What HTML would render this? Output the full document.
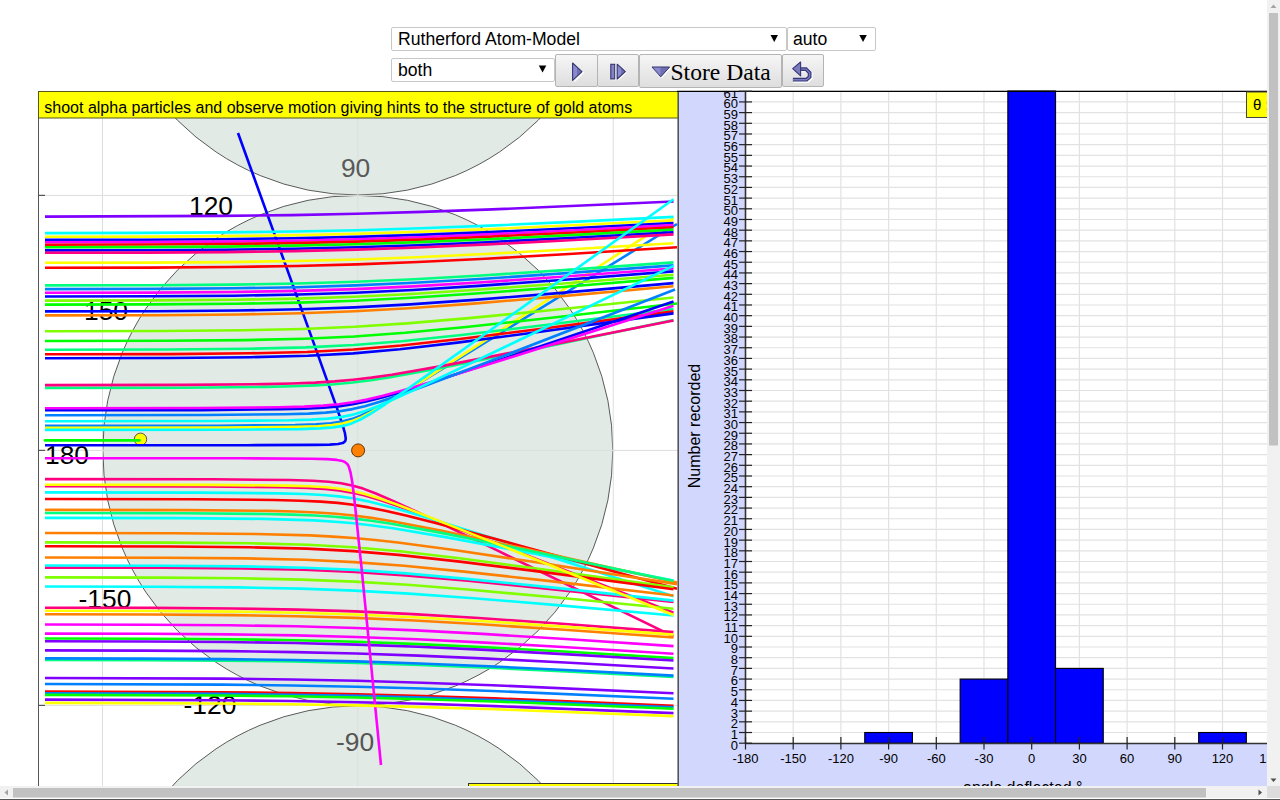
<!DOCTYPE html>
<html><head><meta charset="utf-8">
<style>
html,body{margin:0;padding:0;background:#fff;width:1280px;height:800px;overflow:hidden;font-family:"Liberation Sans",sans-serif;}
.abs{position:absolute;box-sizing:border-box;}
.sel{position:absolute;box-sizing:border-box;border:1px solid #c8c8c8;border-radius:2px;background:#fff;color:#000;font-size:17.6px;line-height:23px;padding-left:6px;white-space:nowrap;overflow:hidden;}
.sel .arr{position:absolute;right:0;top:0;font-size:11px;}
.btn{position:absolute;box-sizing:border-box;border:1px solid #b4b4b4;border-radius:2px;background:linear-gradient(#f6f6f6,#dedede);}
svg{position:absolute;left:0;top:0;}
</style></head>
<body>
<div class="sel" style="left:391px;top:27px;width:396px;height:24px;">Rutherford Atom-Model</div>

<div class="sel" style="left:787px;top:27px;width:89px;height:24px;padding-left:5px;">auto</div>

<div class="sel" style="left:391px;top:58px;width:164px;height:24px;">both</div>


<div class="btn" style="left:555px;top:54px;width:43px;height:33px;"></div>
<div class="btn" style="left:597px;top:54px;width:42px;height:33px;"></div>
<div class="btn" style="left:639px;top:54px;width:143px;height:34px;"></div>
<div class="btn" style="left:782px;top:54px;width:42px;height:33px;"></div>
<div class="abs" style="left:670.5px;top:57.5px;font-family:'Liberation Serif',serif;font-size:23.6px;line-height:28px;color:#000;">Store Data</div>

<svg width="1280" height="800" viewBox="0 0 1280 800">
 <defs><linearGradient id="ig" x1="0" y1="0" x2="1" y2="0"><stop offset="0" stop-color="#8a8ad0"/><stop offset="0.45" stop-color="#8a8ad0"/><stop offset="0.5" stop-color="#6e6eb0"/><stop offset="1" stop-color="#6e6eb0"/></linearGradient></defs>
 <!-- button icons -->
 <path d="M770.5 35 L778 35 L774.25 42 Z" fill="#000"/>
 <path d="M859.3 35 L866.8 35 L863.05 42 Z" fill="#000"/>
 <path d="M538.8 65.5 L546.3 65.5 L542.55 72.5 Z" fill="#000"/>
 <path d="M573.5 64 L583.5 72.5 L574.5 81.5" fill="none" stroke="#ffffff" stroke-width="1.2"/>
 <path d="M572.6 63 L582 71.6 L572.6 80.3 Z" fill="url(#ig)" stroke="#34346f" stroke-width="1.1" stroke-linejoin="round"/>
 <path d="M611.5 79.8 L615.6 79.8 L615.6 65 M618 80 L626.3 72.3" fill="none" stroke="#ffffff" stroke-width="1.1"/>
 <rect x="610.8" y="64.3" width="3.9" height="14.6" fill="#8484c4" stroke="#34346f" stroke-width="1.1"/>
 <path d="M617.2 64.2 L625.3 71.6 L617.2 79 Z" fill="url(#ig)" stroke="#34346f" stroke-width="1.1" stroke-linejoin="round"/>
 <path d="M661.5 77.8 L670.5 67.8" fill="none" stroke="#ffffff" stroke-width="1.1"/>
 <path d="M652 67 L669.6 67 L660.8 76.8 Z" fill="url(#ig)" stroke="#34346f" stroke-width="1" stroke-linejoin="round"/>
 <path d="M800.6 69.1 L806 69.1 L809.6 72.7 L809.6 77 L806.6 79.7 L792.9 79.7" fill="none" stroke="#ffffff" stroke-width="4.8" stroke-linejoin="miter" transform="translate(0.7,0.7)"/>
 <path d="M800.6 69.1 L806 69.1 L809.6 72.7 L809.6 77 L806.6 79.7 L792.9 79.7" fill="none" stroke="#36367a" stroke-width="3.8" stroke-linejoin="miter"/>
 <path d="M800.6 69.1 L806 69.1 L809.6 72.7 L809.6 77 L806.6 79.7 L792.9 79.7" fill="none" stroke="#7c7cbc" stroke-width="1.4" stroke-linejoin="miter"/>
 <path d="M792.7 68.7 L800.6 62 L800.6 75.9 Z" fill="#7c7cbc" stroke="#36367a" stroke-width="1.1" stroke-linejoin="round"/>

 <!-- left panel -->
 <defs>
  <clipPath id="lp"><rect x="39" y="118" width="639" height="668"/></clipPath>
  <clipPath id="rlab"><rect x="679" y="92" width="70" height="694"/></clipPath>
  <clipPath id="rp"><rect x="679" y="92" width="588" height="694"/></clipPath>
 </defs>
 <rect x="38.5" y="91.5" width="640" height="720" fill="#fff" stroke="#555" stroke-width="1"/>
 <g clip-path="url(#lp)">
  <circle cx="357.8" cy="-60" r="255" fill="#e1eae5" stroke="#333" stroke-width="0.8"/>
  <circle cx="357.8" cy="450.4" r="255" fill="#e1eae5" stroke="#333" stroke-width="0.8"/>
  <circle cx="357.8" cy="960.8" r="255" fill="#e1eae5" stroke="#333" stroke-width="0.8"/>
  <g stroke="#dddddd" stroke-width="1">
   <line x1="102.5" y1="118" x2="102.5" y2="786"/>
   <line x1="357.8" y1="118" x2="357.8" y2="786"/>
   <line x1="613.2" y1="118" x2="613.2" y2="786"/>
   <line x1="39" y1="195.4" x2="678" y2="195.4"/>
   <line x1="39" y1="450.4" x2="678" y2="450.4"/>
   <line x1="39" y1="705.4" x2="678" y2="705.4"/>
  </g>
  <g stroke="#555" stroke-width="1.2">
   <line x1="38" y1="195.4" x2="45" y2="195.4"/>
   <line x1="38" y1="450.4" x2="45" y2="450.4"/>
   <line x1="38" y1="705.4" x2="45" y2="705.4"/>
  </g>
  <g font-family="Liberation Sans" font-size="26.4" text-anchor="middle">
   <text x="355.6" y="176.6" fill="#5a5a5a">90</text>
   <text x="211" y="214.7" fill="#000">120</text>
   <text x="106" y="319.7" fill="#000">150</text>
   <text x="67" y="463.7" fill="#000">180</text>
   <text x="105" y="607.7" fill="#000">-150</text>
   <text x="210" y="713.7" fill="#000">-120</text>
   <text x="355" y="750.7" fill="#555">-90</text>
  </g>
  <circle cx="140.5" cy="439.3" r="6.2" fill="#ffff00" stroke="#444" stroke-width="0.9"/>
  <g fill="none" stroke-width="2.6" stroke-linecap="butt" stroke-linejoin="round">
<path d="M45 440.4 L139.5 440.4" stroke="#00ff00" stroke-linecap="round"/>
<path d="M45.0 445.3 L247.0 445.2 L315.3 444.9 L329.7 444.6 L338.1 444.0 L342.7 443.0 L344.2 442.2 L345.1 441.2 L345.6 439.9 L345.7 438.2 L344.9 433.0 L342.4 424.4 L337.3 409.2 L312.3 339.1 L238.0 133.0" stroke="#0000ff"/>
<path d="M45.0 425.9 L218.2 425.7 L295.1 425.0 L316.2 424.3 L330.9 423.2 L342.0 421.6 L351.7 419.1 L361.3 415.4 L373.3 409.6 L389.2 400.8 L411.3 387.8 L492.7 338.0 L677.0 224.0" stroke="#0080ff"/>
<path d="M45.0 427.7 L221.2 427.5 L297.1 426.8 L317.6 426.2 L332.0 425.1 L342.5 423.6 L351.7 421.1 L361.1 417.4 L372.1 411.7 L387.0 403.0 L408.6 389.7 L488.8 338.1 L673.5 218.1" stroke="#ffff00"/>
<path d="M45.0 216.6 L222.3 215.9 L291.7 215.1 L356.9 213.8 L422.1 211.9 L492.4 209.4 L673.5 201.5" stroke="#8000ff"/>
<path d="M45.0 233.1 L143.8 232.9 L224.3 232.4 L293.5 231.5 L356.7 230.2 L420.8 228.2 L490.1 225.6 L572.5 221.9 L673.5 216.9" stroke="#00ffff"/>
<path d="M45.0 236.8 L143.8 236.6 L224.2 236.1 L293.5 235.2 L356.6 233.8 L420.7 231.8 L490.0 229.1 L572.4 225.3 L673.5 220.2" stroke="#ffff00"/>
<path d="M45.0 239.9 L144.8 239.7 L225.2 239.2 L293.4 238.3 L356.6 236.9 L419.7 234.9 L489.9 232.1 L571.3 228.2 L673.5 223.0" stroke="#0000ff"/>
<path d="M45.0 242.3 L144.8 242.1 L225.2 241.6 L293.4 240.7 L356.5 239.3 L419.6 237.2 L488.8 234.4 L571.2 230.5 L673.5 225.1" stroke="#ff00ff"/>
<path d="M45.0 244.7 L144.8 244.5 L225.2 244.0 L293.4 243.1 L356.5 241.6 L419.5 239.6 L488.7 236.7 L571.1 232.7 L673.5 227.3" stroke="#ff0000"/>
<path d="M45.0 247.3 L145.8 247.1 L226.2 246.6 L294.3 245.6 L356.4 244.2 L419.5 242.1 L488.6 239.2 L571.0 235.1 L673.5 229.6" stroke="#00ff00"/>
<path d="M45.0 250.4 L145.8 250.2 L226.2 249.7 L294.3 248.7 L356.4 247.3 L418.4 245.2 L487.5 242.2 L569.8 238.0 L673.5 232.3" stroke="#0000ff"/>
<path d="M45.0 252.8 L145.8 252.6 L226.1 252.1 L294.3 251.1 L356.3 249.6 L418.3 247.5 L487.4 244.4 L569.7 240.2 L673.5 234.4" stroke="#ff0080"/>
<path d="M45.0 262.8 L147.7 262.6 L228.1 262.1 L295.1 261.0 L356.1 259.5 L417.0 257.2 L485.1 254.0 L567.3 249.5 L673.5 243.2" stroke="#ffff00"/>
<path d="M45.0 267.8 L148.7 267.6 L229.0 267.0 L296.1 266.0 L357.0 264.4 L417.8 262.0 L485.8 258.7 L569.1 254.0 L677.0 247.3" stroke="#ff0000"/>
<path d="M45.0 285.4 L151.7 285.2 L231.9 284.6 L296.8 283.5 L355.5 281.8 L414.2 279.2 L481.1 275.5 L564.1 270.1 L673.5 262.4" stroke="#00ff80"/>
<path d="M45.0 289.1 L151.7 288.9 L232.8 288.3 L297.7 287.2 L355.4 285.4 L414.1 282.8 L479.9 279.0 L562.9 273.4 L673.5 265.4" stroke="#0080ff"/>
<path d="M45.0 292.8 L152.7 292.6 L232.8 292.0 L297.6 290.9 L355.3 289.1 L412.9 286.4 L478.7 282.5 L561.7 276.8 L673.5 268.5" stroke="#ff00ff"/>
<path d="M45.0 296.5 L152.7 296.3 L233.8 295.7 L298.5 294.5 L355.2 292.7 L412.8 290.0 L478.5 285.9 L561.4 280.0 L673.5 271.4" stroke="#0000ff"/>
<path d="M45.0 300.6 L153.6 300.4 L234.7 299.8 L298.5 298.6 L355.0 296.8 L411.6 294.0 L477.2 289.8 L560.2 283.7 L673.5 274.7" stroke="#80ff00"/>
<path d="M45.0 304.6 L154.6 304.4 L235.7 303.8 L299.4 302.6 L354.9 300.7 L411.4 297.8 L476.0 293.5 L559.9 287.2 L673.5 277.9" stroke="#00ff00"/>
<path d="M45.0 311.4 L156.6 311.2 L237.6 310.5 L300.2 309.3 L354.7 307.4 L410.1 304.4 L474.6 299.9 L558.3 293.1 L673.5 283.1" stroke="#0000ff"/>
<path d="M45.0 315.4 L157.6 315.2 L238.5 314.5 L301.1 313.3 L354.5 311.3 L408.9 308.3 L473.3 303.6 L557.0 296.6 L673.5 286.2" stroke="#ff8000"/>
<path d="M45.0 331.2 L161.5 331.0 L242.3 330.3 L302.7 329.0 L354.8 326.8 L406.9 323.4 L469.1 318.1 L552.6 310.0 L673.5 297.5" stroke="#80ff00"/>
<path d="M45.0 341.0 L164.5 340.8 L245.2 340.1 L304.4 338.7 L354.3 336.5 L405.2 332.8 L466.2 327.0 L551.5 317.8 L677.0 303.5" stroke="#00ff00"/>
<path d="M45.0 349.7 L167.4 349.5 L248.0 348.8 L306.0 347.4 L353.8 345.0 L401.6 341.2 L461.4 335.0 L545.4 325.0 L673.5 309.0" stroke="#00ff80"/>
<path d="M45.0 354.3 L169.4 354.1 L249.9 353.3 L306.9 352.0 L353.6 349.5 L401.2 345.5 L459.8 339.0 L543.8 328.5 L673.5 311.4" stroke="#ff0000"/>
<path d="M45.0 358.2 L170.4 358.0 L250.8 357.2 L307.7 355.8 L353.3 353.4 L399.8 349.3 L457.4 342.6 L542.2 331.5 L673.5 313.4" stroke="#0000ff"/>
<path d="M45.0 387.9 L184.1 387.7 L264.9 386.9 L292.6 386.3 L315.1 385.4 L334.5 384.2 L352.8 382.5 L371.0 380.2 L390.3 377.3 L442.6 367.7 L526.9 350.7 L673.5 319.9" stroke="#00ff80"/>
<path d="M45.0 385.1 L183.1 384.9 L264.0 384.1 L291.7 383.5 L315.2 382.6 L334.7 381.4 L353.1 379.7 L371.5 377.6 L391.8 374.7 L444.3 365.6 L528.7 349.3 L673.5 320.4" stroke="#ff0080"/>
<path d="M45.0 410.3 L201.7 410.1 L280.8 409.3 L305.0 408.7 L323.6 407.7 L338.5 406.4 L352.6 404.3 L366.1 401.6 L382.1 397.5 L401.4 391.9 L427.3 383.8 L510.2 356.4 L673.5 301.4" stroke="#0000ff"/>
<path d="M45.0 408.2 L199.8 408.0 L278.9 407.2 L304.1 406.6 L323.1 405.6 L338.7 404.2 L352.8 402.3 L367.0 399.6 L383.1 395.8 L402.5 390.4 L428.7 382.8 L512.1 356.9 L673.5 305.7" stroke="#ff00ff"/>
<path d="M45.0 415.2 L205.6 415.0 L284.5 414.3 L308.4 413.6 L325.7 412.6 L339.6 411.2 L352.5 409.1 L364.9 406.2 L379.8 401.8 L398.0 395.6 L422.6 386.7 L505.8 355.1 L675.0 289.5" stroke="#0080ff"/>
<path d="M45.0 421.2 L212.4 421.0 L289.9 420.3 L311.6 419.6 L328.1 418.6 L340.9 417.1 L352.0 414.9 L363.2 411.6 L376.2 406.8 L393.0 399.6 L416.6 388.9 L498.6 350.0 L673.5 265.8" stroke="#00ffff"/>
<path d="M45.0 429.9 L224.1 429.7 L299.9 429.1 L320.0 428.4 L333.3 427.4 L343.2 425.9 L351.8 423.4 L360.5 419.5 L371.0 413.5 L385.3 404.3 L406.0 390.1 L485.4 333.8 L673.5 199.3" stroke="#00ffff"/>
<path d="M45.0 479.1 L212.4 479.3 L289.9 480.0 L312.4 480.7 L328.6 481.7 L341.1 483.2 L352.1 485.4 L363.1 488.6 L375.9 493.5 L392.4 500.6 L415.9 511.4 L497.7 550.7 L673.5 636.3" stroke="#ff0080"/>
<path d="M45.0 486.3 L204.6 486.5 L283.4 487.3 L307.4 487.9 L324.9 488.9 L339.1 490.4 L352.3 492.6 L364.9 495.5 L380.1 500.1 L398.5 506.3 L423.0 515.3 L506.1 547.2 L673.5 612.7" stroke="#ff0080"/>
<path d="M45.0 492.4 L199.8 492.6 L278.9 493.4 L304.1 494.0 L323.0 495.0 L338.6 496.4 L352.6 498.3 L366.8 501.1 L382.7 504.9 L402.1 510.2 L428.2 518.0 L511.5 544.2 L673.5 596.2" stroke="#00ffff"/>
<path d="M45.0 517.9 L182.1 518.1 L263.1 518.9 L314.4 520.4 L334.8 521.7 L353.3 523.3 L372.6 525.5 L393.0 528.3 L445.6 537.1 L530.2 552.9 L673.5 580.6" stroke="#00ffff"/>
<path d="M45.0 499.0 L193.9 499.2 L274.3 500.0 L300.6 500.7 L320.8 501.6 L337.6 502.9 L353.0 504.8 L368.6 507.4 L386.3 511.0 L407.0 515.8 L434.6 522.8 L519.2 545.4 L677.0 588.8" stroke="#ff0000"/>
<path d="M45.0 509.9 L187.0 510.1 L267.8 510.9 L294.4 511.5 L316.8 512.5 L336.1 513.8 L353.4 515.5 L371.5 517.9 L390.7 521.0 L441.9 530.9 L526.8 549.1 L677.0 582.4" stroke="#ff8000"/>
<path d="M45.0 513.0 L184.1 513.2 L264.9 514.0 L292.6 514.6 L315.1 515.5 L334.5 516.7 L352.8 518.4 L371.1 520.7 L391.3 523.7 L442.7 533.1 L526.9 550.2 L673.5 580.9" stroke="#00ff80"/>
<path d="M45.0 533.0 L174.3 533.2 L255.6 534.0 L310.2 535.4 L332.9 536.6 L353.6 538.0 L375.2 540.0 L397.8 542.5 L454.1 550.0 L539.5 562.7 L677.0 584.1" stroke="#ff8000"/>
<path d="M45.0 542.4 L170.4 542.6 L250.8 543.3 L307.7 544.8 L353.3 547.2 L399.8 551.3 L457.4 558.0 L542.1 569.2 L673.5 587.4" stroke="#80ff00"/>
<path d="M45.0 546.3 L169.4 546.5 L249.9 547.3 L306.9 548.6 L353.6 551.1 L401.1 555.1 L459.8 561.6 L543.7 572.1 L673.5 589.3" stroke="#ff0000"/>
<path d="M45.0 557.5 L165.4 557.7 L246.1 558.4 L305.3 559.8 L354.2 562.1 L404.0 565.8 L464.0 571.6 L548.2 580.9 L673.5 595.5" stroke="#ff8000"/>
<path d="M45.0 567.6 L162.5 567.8 L243.3 568.5 L303.6 569.8 L354.7 572.0 L405.8 575.4 L467.9 580.8 L551.4 589.1 L673.5 602.0" stroke="#ff0080"/>
<path d="M45.0 565.5 L163.5 565.7 L244.2 566.4 L304.5 567.8 L354.6 569.9 L405.6 573.4 L466.8 578.9 L551.1 587.4 L673.5 600.6" stroke="#00ffff"/>
<path d="M45.0 577.4 L159.5 577.6 L240.4 578.3 L301.9 579.6 L354.2 581.6 L407.4 584.8 L470.7 589.8 L554.3 597.3 L673.5 608.8" stroke="#80ff00"/>
<path d="M45.0 586.5 L156.6 586.7 L237.6 587.4 L300.2 588.6 L354.6 590.6 L408.9 593.6 L473.4 598.2 L557.1 605.1 L673.5 615.5" stroke="#00ffff"/>
<path d="M45.0 484.7 L206.6 484.9 L285.3 485.6 L308.3 486.3 L326.1 487.3 L339.7 488.7 L352.3 490.9 L364.9 494.0 L379.5 498.5 L397.5 504.8 L421.9 514.1 L504.6 546.9 L673.5 615.0" stroke="#ffff00"/>
<path d="M45.0 607.7 L152.7 607.9 L232.8 608.5 L297.6 609.6 L355.3 611.4 L412.9 614.1 L478.7 618.0 L561.7 623.8 L673.5 632.1" stroke="#ff0080"/>
<path d="M45.0 610.8 L151.7 611.0 L232.8 611.6 L297.7 612.7 L355.4 614.5 L414.0 617.2 L479.8 621.0 L562.8 626.6 L673.5 634.6" stroke="#ffff00"/>
<path d="M45.0 614.3 L151.7 614.5 L231.9 615.1 L296.8 616.2 L355.5 617.9 L414.2 620.5 L481.0 624.3 L564.1 629.8 L673.5 637.5" stroke="#ff8000"/>
<path d="M45.0 624.5 L149.7 624.7 L230.0 625.3 L295.9 626.3 L355.8 628.0 L415.6 630.4 L482.5 633.9 L565.6 639.0 L673.5 646.1" stroke="#ff00ff"/>
<path d="M45.0 633.6 L148.7 633.8 L229.0 634.4 L296.1 635.4 L356.0 637.0 L416.9 639.3 L484.9 642.6 L567.1 647.3 L673.5 653.8" stroke="#ff00ff"/>
<path d="M45.0 638.5 L147.7 638.7 L228.1 639.2 L295.1 640.2 L356.1 641.8 L418.0 644.1 L486.1 647.3 L568.3 651.8 L673.5 658.1" stroke="#00ff00"/>
<path d="M45.0 641.3 L146.7 641.5 L227.1 642.0 L294.2 643.0 L356.2 644.6 L418.1 646.8 L486.2 649.9 L568.5 654.4 L673.5 660.5" stroke="#8000ff"/>
<path d="M45.0 650.4 L145.8 650.6 L226.2 651.1 L294.3 652.1 L356.4 653.5 L418.4 655.6 L487.5 658.6 L569.8 662.8 L673.5 668.5" stroke="#8000ff"/>
<path d="M45.0 659.9 L144.8 660.1 L225.2 660.6 L293.4 661.5 L356.5 662.9 L419.6 664.9 L488.8 667.7 L571.2 671.6 L673.5 676.9" stroke="#00ff80"/>
<path d="M45.0 658.4 L144.8 658.6 L225.2 659.1 L293.4 660.0 L356.5 661.4 L419.6 663.5 L488.8 666.3 L571.2 670.2 L673.5 675.6" stroke="#0080ff"/>
<path d="M45.0 678.0 L222.3 678.6 L291.6 679.5 L356.9 680.8 L422.1 682.7 L492.4 685.2 L673.5 693.3" stroke="#8000ff"/>
<path d="M45.0 684.0 L222.3 684.6 L291.7 685.5 L356.9 686.7 L422.2 688.5 L492.5 691.0 L673.5 698.7" stroke="#0080ff"/>
<path d="M45.0 691.6 L221.4 692.2 L291.8 693.0 L357.1 694.3 L422.4 696.0 L493.7 698.3 L673.5 705.7" stroke="#ff0000"/>
<path d="M45.0 693.3 L221.4 693.9 L291.8 694.7 L357.1 695.9 L422.4 697.6 L493.8 700.0 L673.5 707.3" stroke="#0080ff"/>
<path d="M45.0 694.9 L221.4 695.5 L291.8 696.3 L357.1 697.5 L422.4 699.2 L493.8 701.5 L673.5 708.7" stroke="#00ff00"/>
<path d="M45.0 699.6 L220.4 700.2 L290.8 701.0 L357.2 702.2 L423.5 703.8 L494.9 706.1 L673.5 713.1" stroke="#8000ff"/>
<path d="M45.0 458.2 L241.3 458.3 L311.7 458.7 L327.2 459.1 L336.9 459.9 L342.7 461.1 L344.8 462.0 L346.4 463.2 L347.7 464.7 L348.8 466.6 L350.5 472.3 L352.2 481.8 L354.2 497.5 L361.6 568.4 L381.0 765.0" stroke="#ff00ff"/>
<path d="M45.0 702.9 L220.4 703.5 L290.9 704.3 L357.2 705.4 L423.6 707.1 L495.0 709.3 L673.5 716.1" stroke="#ffff00"/>
  </g>
  <circle cx="358.1" cy="450.4" r="6.5" fill="#ff8000" stroke="#663300" stroke-width="1"/>
  <rect x="468.5" y="783.5" width="215" height="20" fill="#ffff00" stroke="#333" stroke-width="1"/>
 </g>
 <rect x="38.5" y="91.5" width="640" height="26.5" fill="#ffff00" stroke="#55551a" stroke-width="1"/>
 <text x="44.3" y="112.8" font-family="Liberation Sans" font-size="16" fill="#000">shoot alpha particles and observe motion giving hints to the structure of gold atoms</text>
 <line x1="678.2" y1="91" x2="678.2" y2="786" stroke="#555" stroke-width="1.6"/>

 <!-- right panel -->
 <rect x="679" y="91" width="601" height="695" fill="#d2d7fe"/>
 <rect x="745" y="91" width="522" height="652" fill="#fff"/>
 <g stroke="#e2e2e2" stroke-width="1.2">
<line x1="745" y1="732.51" x2="1267" y2="732.51"/>
<line x1="745" y1="721.82" x2="1267" y2="721.82"/>
<line x1="745" y1="711.14" x2="1267" y2="711.14"/>
<line x1="745" y1="700.45" x2="1267" y2="700.45"/>
<line x1="745" y1="689.76" x2="1267" y2="689.76"/>
<line x1="745" y1="679.07" x2="1267" y2="679.07"/>
<line x1="745" y1="668.38" x2="1267" y2="668.38"/>
<line x1="745" y1="657.70" x2="1267" y2="657.70"/>
<line x1="745" y1="647.01" x2="1267" y2="647.01"/>
<line x1="745" y1="636.32" x2="1267" y2="636.32"/>
<line x1="745" y1="625.63" x2="1267" y2="625.63"/>
<line x1="745" y1="614.94" x2="1267" y2="614.94"/>
<line x1="745" y1="604.26" x2="1267" y2="604.26"/>
<line x1="745" y1="593.57" x2="1267" y2="593.57"/>
<line x1="745" y1="582.88" x2="1267" y2="582.88"/>
<line x1="745" y1="572.19" x2="1267" y2="572.19"/>
<line x1="745" y1="561.50" x2="1267" y2="561.50"/>
<line x1="745" y1="550.82" x2="1267" y2="550.82"/>
<line x1="745" y1="540.13" x2="1267" y2="540.13"/>
<line x1="745" y1="529.44" x2="1267" y2="529.44"/>
<line x1="745" y1="518.75" x2="1267" y2="518.75"/>
<line x1="745" y1="508.06" x2="1267" y2="508.06"/>
<line x1="745" y1="497.38" x2="1267" y2="497.38"/>
<line x1="745" y1="486.69" x2="1267" y2="486.69"/>
<line x1="745" y1="476.00" x2="1267" y2="476.00"/>
<line x1="745" y1="465.31" x2="1267" y2="465.31"/>
<line x1="745" y1="454.62" x2="1267" y2="454.62"/>
<line x1="745" y1="443.94" x2="1267" y2="443.94"/>
<line x1="745" y1="433.25" x2="1267" y2="433.25"/>
<line x1="745" y1="422.56" x2="1267" y2="422.56"/>
<line x1="745" y1="411.87" x2="1267" y2="411.87"/>
<line x1="745" y1="401.18" x2="1267" y2="401.18"/>
<line x1="745" y1="390.50" x2="1267" y2="390.50"/>
<line x1="745" y1="379.81" x2="1267" y2="379.81"/>
<line x1="745" y1="369.12" x2="1267" y2="369.12"/>
<line x1="745" y1="358.43" x2="1267" y2="358.43"/>
<line x1="745" y1="347.74" x2="1267" y2="347.74"/>
<line x1="745" y1="337.06" x2="1267" y2="337.06"/>
<line x1="745" y1="326.37" x2="1267" y2="326.37"/>
<line x1="745" y1="315.68" x2="1267" y2="315.68"/>
<line x1="745" y1="304.99" x2="1267" y2="304.99"/>
<line x1="745" y1="294.30" x2="1267" y2="294.30"/>
<line x1="745" y1="283.62" x2="1267" y2="283.62"/>
<line x1="745" y1="272.93" x2="1267" y2="272.93"/>
<line x1="745" y1="262.24" x2="1267" y2="262.24"/>
<line x1="745" y1="251.55" x2="1267" y2="251.55"/>
<line x1="745" y1="240.86" x2="1267" y2="240.86"/>
<line x1="745" y1="230.18" x2="1267" y2="230.18"/>
<line x1="745" y1="219.49" x2="1267" y2="219.49"/>
<line x1="745" y1="208.80" x2="1267" y2="208.80"/>
<line x1="745" y1="198.11" x2="1267" y2="198.11"/>
<line x1="745" y1="187.42" x2="1267" y2="187.42"/>
<line x1="745" y1="176.74" x2="1267" y2="176.74"/>
<line x1="745" y1="166.05" x2="1267" y2="166.05"/>
<line x1="745" y1="155.36" x2="1267" y2="155.36"/>
<line x1="745" y1="144.67" x2="1267" y2="144.67"/>
<line x1="745" y1="133.98" x2="1267" y2="133.98"/>
<line x1="745" y1="123.30" x2="1267" y2="123.30"/>
<line x1="745" y1="112.61" x2="1267" y2="112.61"/>
<line x1="745" y1="101.92" x2="1267" y2="101.92"/>
<line x1="745" y1="91.23" x2="1267" y2="91.23"/>
<line x1="793.20" y1="91" x2="793.20" y2="743"/>
<line x1="840.90" y1="91" x2="840.90" y2="743"/>
<line x1="888.60" y1="91" x2="888.60" y2="743"/>
<line x1="936.30" y1="91" x2="936.30" y2="743"/>
<line x1="984.00" y1="91" x2="984.00" y2="743"/>
<line x1="1031.70" y1="91" x2="1031.70" y2="743"/>
<line x1="1079.40" y1="91" x2="1079.40" y2="743"/>
<line x1="1127.10" y1="91" x2="1127.10" y2="743"/>
<line x1="1174.80" y1="91" x2="1174.80" y2="743"/>
<line x1="1222.50" y1="91" x2="1222.50" y2="743"/>
 </g>
 <g fill="#0000ff" stroke="#000" stroke-width="1.1">
<rect x="864.75" y="732.51" width="47.70" height="10.69"/>
<rect x="960.15" y="679.07" width="47.70" height="64.13"/>
<rect x="1007.85" y="91.00" width="47.70" height="652.20"/>
<rect x="1055.55" y="668.38" width="47.70" height="74.82"/>
<rect x="1198.65" y="732.51" width="47.70" height="10.69"/>
 </g>
 <line x1="677" y1="91.3" x2="1267" y2="91.3" stroke="#000" stroke-width="1.3"/>
 <line x1="745.5" y1="91" x2="745.5" y2="743.5" stroke="#333" stroke-width="1.6"/>
 <line x1="745" y1="743.5" x2="1267" y2="743.5" stroke="#333" stroke-width="1.6"/>
 <g stroke="#222" stroke-width="1.2">
<line x1="739" y1="743.20" x2="752" y2="743.20"/>
<line x1="739" y1="732.51" x2="752" y2="732.51"/>
<line x1="739" y1="721.82" x2="752" y2="721.82"/>
<line x1="739" y1="711.14" x2="752" y2="711.14"/>
<line x1="739" y1="700.45" x2="752" y2="700.45"/>
<line x1="739" y1="689.76" x2="752" y2="689.76"/>
<line x1="739" y1="679.07" x2="752" y2="679.07"/>
<line x1="739" y1="668.38" x2="752" y2="668.38"/>
<line x1="739" y1="657.70" x2="752" y2="657.70"/>
<line x1="739" y1="647.01" x2="752" y2="647.01"/>
<line x1="739" y1="636.32" x2="752" y2="636.32"/>
<line x1="739" y1="625.63" x2="752" y2="625.63"/>
<line x1="739" y1="614.94" x2="752" y2="614.94"/>
<line x1="739" y1="604.26" x2="752" y2="604.26"/>
<line x1="739" y1="593.57" x2="752" y2="593.57"/>
<line x1="739" y1="582.88" x2="752" y2="582.88"/>
<line x1="739" y1="572.19" x2="752" y2="572.19"/>
<line x1="739" y1="561.50" x2="752" y2="561.50"/>
<line x1="739" y1="550.82" x2="752" y2="550.82"/>
<line x1="739" y1="540.13" x2="752" y2="540.13"/>
<line x1="739" y1="529.44" x2="752" y2="529.44"/>
<line x1="739" y1="518.75" x2="752" y2="518.75"/>
<line x1="739" y1="508.06" x2="752" y2="508.06"/>
<line x1="739" y1="497.38" x2="752" y2="497.38"/>
<line x1="739" y1="486.69" x2="752" y2="486.69"/>
<line x1="739" y1="476.00" x2="752" y2="476.00"/>
<line x1="739" y1="465.31" x2="752" y2="465.31"/>
<line x1="739" y1="454.62" x2="752" y2="454.62"/>
<line x1="739" y1="443.94" x2="752" y2="443.94"/>
<line x1="739" y1="433.25" x2="752" y2="433.25"/>
<line x1="739" y1="422.56" x2="752" y2="422.56"/>
<line x1="739" y1="411.87" x2="752" y2="411.87"/>
<line x1="739" y1="401.18" x2="752" y2="401.18"/>
<line x1="739" y1="390.50" x2="752" y2="390.50"/>
<line x1="739" y1="379.81" x2="752" y2="379.81"/>
<line x1="739" y1="369.12" x2="752" y2="369.12"/>
<line x1="739" y1="358.43" x2="752" y2="358.43"/>
<line x1="739" y1="347.74" x2="752" y2="347.74"/>
<line x1="739" y1="337.06" x2="752" y2="337.06"/>
<line x1="739" y1="326.37" x2="752" y2="326.37"/>
<line x1="739" y1="315.68" x2="752" y2="315.68"/>
<line x1="739" y1="304.99" x2="752" y2="304.99"/>
<line x1="739" y1="294.30" x2="752" y2="294.30"/>
<line x1="739" y1="283.62" x2="752" y2="283.62"/>
<line x1="739" y1="272.93" x2="752" y2="272.93"/>
<line x1="739" y1="262.24" x2="752" y2="262.24"/>
<line x1="739" y1="251.55" x2="752" y2="251.55"/>
<line x1="739" y1="240.86" x2="752" y2="240.86"/>
<line x1="739" y1="230.18" x2="752" y2="230.18"/>
<line x1="739" y1="219.49" x2="752" y2="219.49"/>
<line x1="739" y1="208.80" x2="752" y2="208.80"/>
<line x1="739" y1="198.11" x2="752" y2="198.11"/>
<line x1="739" y1="187.42" x2="752" y2="187.42"/>
<line x1="739" y1="176.74" x2="752" y2="176.74"/>
<line x1="739" y1="166.05" x2="752" y2="166.05"/>
<line x1="739" y1="155.36" x2="752" y2="155.36"/>
<line x1="739" y1="144.67" x2="752" y2="144.67"/>
<line x1="739" y1="133.98" x2="752" y2="133.98"/>
<line x1="739" y1="123.30" x2="752" y2="123.30"/>
<line x1="739" y1="112.61" x2="752" y2="112.61"/>
<line x1="739" y1="101.92" x2="752" y2="101.92"/>
<line x1="739" y1="91.23" x2="752" y2="91.23"/>
<line x1="745.50" y1="737" x2="745.50" y2="749.5"/>
<line x1="793.20" y1="737" x2="793.20" y2="749.5"/>
<line x1="840.90" y1="737" x2="840.90" y2="749.5"/>
<line x1="888.60" y1="737" x2="888.60" y2="749.5"/>
<line x1="936.30" y1="737" x2="936.30" y2="749.5"/>
<line x1="984.00" y1="737" x2="984.00" y2="749.5"/>
<line x1="1031.70" y1="737" x2="1031.70" y2="749.5"/>
<line x1="1079.40" y1="737" x2="1079.40" y2="749.5"/>
<line x1="1127.10" y1="737" x2="1127.10" y2="749.5"/>
<line x1="1174.80" y1="737" x2="1174.80" y2="749.5"/>
<line x1="1222.50" y1="737" x2="1222.50" y2="749.5"/>
<line x1="1270.20" y1="737" x2="1270.20" y2="749.5"/>
 </g>
 <g font-family="Liberation Sans" font-size="13" fill="#000" text-anchor="end" clip-path="url(#rlab)">
<text x="738" y="749.60">0</text>
<text x="738" y="738.91">1</text>
<text x="738" y="728.22">2</text>
<text x="738" y="717.54">3</text>
<text x="738" y="706.85">4</text>
<text x="738" y="696.16">5</text>
<text x="738" y="685.47">6</text>
<text x="738" y="674.78">7</text>
<text x="738" y="664.10">8</text>
<text x="738" y="653.41">9</text>
<text x="738" y="642.72">10</text>
<text x="738" y="632.03">11</text>
<text x="738" y="621.34">12</text>
<text x="738" y="610.66">13</text>
<text x="738" y="599.97">14</text>
<text x="738" y="589.28">15</text>
<text x="738" y="578.59">16</text>
<text x="738" y="567.90">17</text>
<text x="738" y="557.22">18</text>
<text x="738" y="546.53">19</text>
<text x="738" y="535.84">20</text>
<text x="738" y="525.15">21</text>
<text x="738" y="514.46">22</text>
<text x="738" y="503.78">23</text>
<text x="738" y="493.09">24</text>
<text x="738" y="482.40">25</text>
<text x="738" y="471.71">26</text>
<text x="738" y="461.02">27</text>
<text x="738" y="450.34">28</text>
<text x="738" y="439.65">29</text>
<text x="738" y="428.96">30</text>
<text x="738" y="418.27">31</text>
<text x="738" y="407.58">32</text>
<text x="738" y="396.90">33</text>
<text x="738" y="386.21">34</text>
<text x="738" y="375.52">35</text>
<text x="738" y="364.83">36</text>
<text x="738" y="354.14">37</text>
<text x="738" y="343.46">38</text>
<text x="738" y="332.77">39</text>
<text x="738" y="322.08">40</text>
<text x="738" y="311.39">41</text>
<text x="738" y="300.70">42</text>
<text x="738" y="290.02">43</text>
<text x="738" y="279.33">44</text>
<text x="738" y="268.64">45</text>
<text x="738" y="257.95">46</text>
<text x="738" y="247.26">47</text>
<text x="738" y="236.58">48</text>
<text x="738" y="225.89">49</text>
<text x="738" y="215.20">50</text>
<text x="738" y="204.51">51</text>
<text x="738" y="193.82">52</text>
<text x="738" y="183.14">53</text>
<text x="738" y="172.45">54</text>
<text x="738" y="161.76">55</text>
<text x="738" y="151.07">56</text>
<text x="738" y="140.38">57</text>
<text x="738" y="129.70">58</text>
<text x="738" y="119.01">59</text>
<text x="738" y="108.32">60</text>
<text x="738" y="97.63">61</text>
 </g>
 <g font-family="Liberation Sans" font-size="13" fill="#000" text-anchor="middle">
<text x="745.50" y="763">-180</text>
<text x="793.20" y="763">-150</text>
<text x="840.90" y="763">-120</text>
<text x="888.60" y="763">-90</text>
<text x="936.30" y="763">-60</text>
<text x="984.00" y="763">-30</text>
<text x="1031.70" y="763">0</text>
<text x="1079.40" y="763">30</text>
<text x="1127.10" y="763">60</text>
<text x="1174.80" y="763">90</text>
<text x="1222.50" y="763">120</text>
<text x="1270.20" y="763">150</text>
 </g>
 <text transform="translate(700,426) rotate(-90)" font-family="Liberation Sans" font-size="16" text-anchor="middle" fill="#000">Number recorded</text>
 <text x="963" y="793" font-family="Liberation Sans" font-size="16" fill="#000">angle deflected °</text>
 <rect x="1246.5" y="92" width="21" height="25.5" fill="#ffff00" stroke="#444" stroke-width="1"/>
 <text x="1253" y="110" font-family="Liberation Sans" font-size="15" fill="#000">θ :</text>

 <!-- scrollbars -->
 <rect x="0" y="786" width="1267" height="12" fill="#f1f1f1"/>
 <rect x="13" y="788" width="1193" height="9.5" fill="#c1c1c1"/>
 <rect x="0" y="798" width="1280" height="1" fill="#fff"/>
 <rect x="0" y="799" width="1280" height="1" fill="#555"/>
 <path d="M4.5 792.5 L8 789.5 L8 795.5 Z" fill="#a3a3a3"/>
 <path d="M1262 792.5 L1258.5 789.5 L1258.5 795.5 Z" fill="#505050"/>
 <rect x="1267" y="0" width="13" height="786" fill="#f1f1f1"/>
 <rect x="1269" y="13" width="9" height="432.5" fill="#c1c1c1"/>
 <path d="M1273.5 4.5 L1276.5 8 L1270.5 8 Z" fill="#a3a3a3"/>
 <path d="M1273.5 782 L1276.5 778.5 L1270.5 778.5 Z" fill="#505050"/>
 <rect x="1267" y="786" width="13" height="12" fill="#dcdcdc"/>
</svg>
</body></html>
